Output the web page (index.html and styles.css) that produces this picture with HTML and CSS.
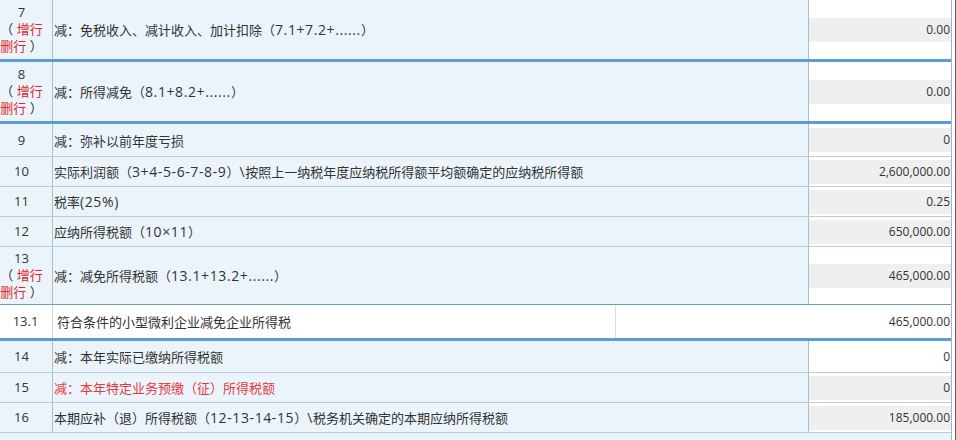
FILE: index.html
```html
<!DOCTYPE html>
<html lang="zh-CN">
<head>
<meta charset="utf-8">
<title>企业所得税申报表</title>
<link rel="stylesheet" href="styles.css">
</head>
<body>
<div class="frame">
  <div class="sheet">
    <div class="row dbl h59">
      <div class="c-no"><div class="no-in">7<br>（ <span class="lk">增行</span> <span class="lk">删行</span> ）</div></div>
      <div class="c-name">减：免税收入、减计收入、加计扣除（<span class="en">7.1+7.2+......</span>）</div>
      <div class="c-val"><div class="inp">0.00</div></div>
    </div>
    <div class="row dbl h59">
      <div class="c-no"><div class="no-in">8<br>（ <span class="lk">增行</span> <span class="lk">删行</span> ）</div></div>
      <div class="c-name">减：所得减免（<span class="en">8.1+8.2+......</span>）</div>
      <div class="c-val"><div class="inp">0.00</div></div>
    </div>
    <div class="row h32">
      <div class="c-no">9</div>
      <div class="c-name">减：弥补以前年度亏损</div>
      <div class="c-val"><div class="inp">0</div></div>
    </div>
    <div class="row h29">
      <div class="c-no">10</div>
      <div class="c-name">实际利润额（<span class="en">3+4-5-6-7-8-9</span>）<span class="en">\</span>按照上一纳税年度应纳税所得额平均额确定的应纳税所得额</div>
      <div class="c-val"><div class="inp">2,600,000.00</div></div>
    </div>
    <div class="row h29">
      <div class="c-no">11</div>
      <div class="c-name">税率<span class="en">(25%)</span></div>
      <div class="c-val"><div class="inp">0.25</div></div>
    </div>
    <div class="row h29">
      <div class="c-no">12</div>
      <div class="c-name">应纳所得税额（<span class="en">10×11</span>）</div>
      <div class="c-val"><div class="inp">650,000.00</div></div>
    </div>
    <div class="row blue-b h57">
      <div class="c-no"><div class="no-in">13<br>（ <span class="lk">增行</span> <span class="lk">删行</span> ）</div></div>
      <div class="c-name">减：减免所得税额（<span class="en">13.1+13.2+......</span>）</div>
      <div class="c-val"><div class="inp">465,000.00</div></div>
    </div>
    <div class="row sub dbl h33">
      <div class="c-no">13.1</div>
      <div class="sub-name">符合条件的小型微利企业减免企业所得税</div>
      <div class="sub-val">465,000.00</div>
    </div>
    <div class="row h31">
      <div class="c-no">14</div>
      <div class="c-name">减：本年实际已缴纳所得税额</div>
      <div class="c-val"><div class="inp edit">0</div></div>
    </div>
    <div class="row h29">
      <div class="c-no">15</div>
      <div class="c-name red">减：本年特定业务预缴（征）所得税额</div>
      <div class="c-val"><div class="inp">0</div></div>
    </div>
    <div class="row h29">
      <div class="c-no">16</div>
      <div class="c-name">本期应补（退）所得税额（<span class="en">12-13-14-15</span>）<span class="en">\</span>税务机关确定的本期应纳所得税额</div>
      <div class="c-val"><div class="inp">185,000.00</div></div>
    </div>
    <div class="row title">汇总纳税企业总分机构税款计算</div>
  </div>
</div>
</body>
</html>
```

FILE: styles.css
```css
html, body {
  margin: 0;
  padding: 0;
  background: #ffffff;
  overflow: hidden;
}

body {
  font-family: "Open Sans", "Noto Sans CJK SC", sans-serif;
  font-size: 13px;
  color: #333333;
  text-spacing-trim: space-all;
}

.frame {
  width: 956px;
  height: 440px;
  overflow: hidden;
  box-sizing: border-box;
  border-right: 1px solid #5f5f5f;
}

.sheet {
  margin-left: -9px;
  width: 961px;
  box-sizing: border-box;
  border-right: 1px solid #9db6ca;
}

.row {
  display: flex;
  background: #ebf4fb;
  border-bottom: 1px solid #b7cbdb;
}

.row.dbl {
  border-bottom: 3px solid transparent;
  border-image: linear-gradient(to bottom, #4a86bf 0 1px, #c4dcef 1px 2px, #5c9bd3 2px 3px) 0 0 3 0 / 0 0 3px 0 stretch;
}

.row.blue-b {
  border-bottom-color: #6c9ac4;
}

.h59 { height: 59px; }
.h57 { height: 57px; }
.h33 { height: 33px; }
.h32 { height: 32px; }
.h31 { height: 31px; }
.h29 { height: 29px; }

.c-no {
  width: 62px;
  flex: none;
  box-sizing: border-box;
  border-right: 1px solid #a9c0d3;
  display: flex;
  align-items: center;
  justify-content: center;
  text-align: center;
  line-height: 17px;
}

.no-in {
  width: 100%;
  text-align: center;
}

.lk {
  color: #e0262e;
  white-space: nowrap;
}

.c-name {
  width: 756px;
  flex: none;
  box-sizing: border-box;
  border-right: 1px solid #a9c0d3;
  display: flex;
  align-items: center;
  padding-left: 1px;
  white-space: nowrap;
}

.c-name .en {
  font-size: 14px;
  letter-spacing: 0.6px;
}

.c-name.red {
  color: #e53a3d;
}

.c-val {
  flex: 1;
  background: #ffffff;
  display: flex;
  align-items: center;
}

.inp {
  flex: 1;
  height: 24px;
  line-height: 24px;
  background: #efefef;
  text-align: right;
  padding-right: 1px;
  font-size: 12px;
}

.inp.edit {
  background: #ffffff;
}

.row.sub {
  background: #ffffff;
}

.row.sub .c-no {
  padding-left: 8px;
  border-right-color: #c5d4e0;
}

.sub-name {
  width: 563px;
  flex: none;
  box-sizing: border-box;
  border-right: 1px solid #d5e0e8;
  padding-left: 4px;
  display: flex;
  align-items: center;
  white-space: nowrap;
}

.sub-val {
  flex: 1;
  display: flex;
  align-items: center;
  justify-content: flex-end;
  padding-right: 1px;
  font-size: 12px;
}

.row.title {
  height: 24px;
  justify-content: center;
  padding-top: 5px;
  line-height: 17px;
  border-bottom: none;
}
```
